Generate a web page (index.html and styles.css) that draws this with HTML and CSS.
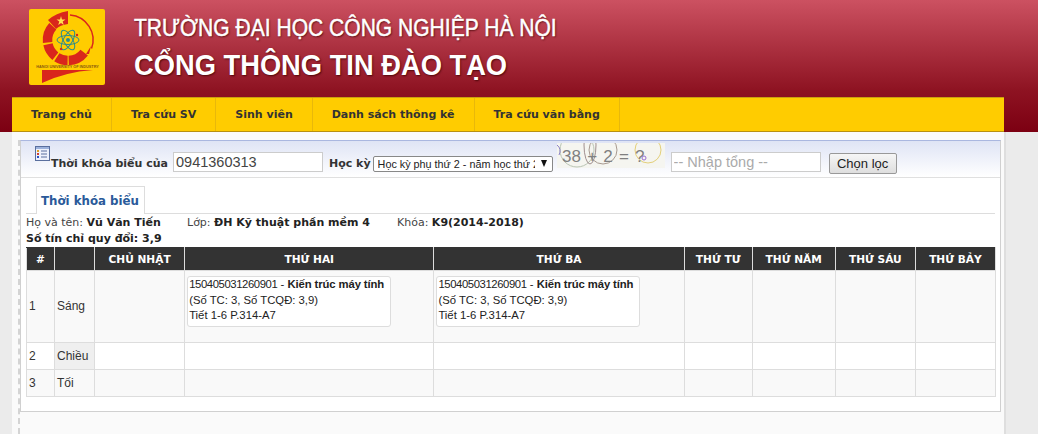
FILE: index.html
```html
<!DOCTYPE html>
<html lang="vi">
<head>
    <meta charset="UTF-8">
    <meta name="viewport" content="width=device-width, initial-scale=1.0">
    <title>Thời khóa biểu</title>
    <link rel="stylesheet" href="styles.css">
</head>
<body>
    <div class="top">
        <div class="brand">
            <svg class="logo" width="76" height="76" viewBox="0 0 76 76">
                <rect width="76" height="76" rx="2" fill="#ffcc00"/>
                <g fill="none" stroke="#d9261c" stroke-width="9.500">
                    <path d="M23.800 17.300 A20.500 20.500 0 0 0 18.600 33.500"/>
                    <path d="M19 35.300 A20.500 20.500 0 0 0 26.400 47.200"/>
                    <path d="M27.800 48.200 A20.500 20.500 0 0 0 38.600 51.500"/>
                    <path d="M39.700 51.500 A20.500 20.500 0 0 0 55.200 43.600"/>
                </g>
                <path d="M39 2 L39 15 Q31 16 27 20 L19 11 Q27 4 39 2 Z" fill="#d9261c"/>
                <polygon points="32,7 33,10.500 36.500,10.500 33.700,12.500 34.800,16 32,14 29.200,16 30.300,12.500 27.500,10.500 31,10.500" fill="#ffe14d"/>
                <path d="M41 6 A25 25 0 0 1 62.500 39.600" fill="none" stroke="#d9261c" stroke-width="1.500"/>
                <path d="M62 37 L57 45 L60 45 Z" fill="#d9261c"/>
                <g fill="none" stroke="#2f8c8c" stroke-width="1">
                    <ellipse cx="39" cy="31" rx="11" ry="4.500"/>
                    <ellipse cx="39" cy="31" rx="11" ry="4.500" transform="rotate(60 39 31)"/>
                    <ellipse cx="39" cy="31" rx="11" ry="4.500" transform="rotate(120 39 31)"/>
                </g>
                <circle cx="39" cy="31" r="2" fill="#2f8c8c"/>
                <circle cx="48" cy="26" r="1.200" fill="#d9261c"/>
                <circle cx="32" cy="40" r="1.200" fill="#d9261c"/>
                <text class="logo-text" x="38.500" y="59" text-anchor="middle">HANOI UNIVERSITY OF INDUSTRY</text>
                <path d="M13 61 L64 61 Q36 63 13 74 Z" fill="#d9261c"/>
            </svg>
            <div class="brand-text">
                <div class="school">TRƯỜNG ĐẠI HỌC CÔNG NGHIỆP HÀ NỘI</div>
                <div class="portal">CỔNG THÔNG TIN ĐÀO TẠO</div>
            </div>
        </div>
        <ul class="nav">
            <li>Trang chủ</li>
            <li>Tra cứu SV</li>
            <li>Sinh viên</li>
            <li>Danh sách thông kê</li>
            <li>Tra cứu văn bằng</li>
        </ul>
    </div>

    <div class="main">
        <div class="content">
            <div class="panel">
                <form class="filter" onsubmit="return false;">
                    <svg class="filter-icon" width="15" height="15" viewBox="0 0 15 15">
                        <rect x="0.500" y="0.500" width="14" height="14" fill="#eef1fb" stroke="#5a6f9e"/>
                        <rect x="1" y="1" width="13" height="2" fill="#9db2dc"/>
                        <rect x="2" y="4" width="2" height="2" fill="#e0a020"/>
                        <rect x="2" y="7" width="2" height="2" fill="#d04030"/>
                        <rect x="2" y="10" width="2" height="2" fill="#3050c0"/>
                        <path d="M6 5h6M6 8h6M6 11h6" stroke="#5a6f9e"/>
                    </svg>
                    <label class="filter-label" for="masv">Thời khóa biểu của</label>
                    <input class="field" type="text" id="masv" value="0941360313">
                    <label class="filter-label term-label" for="hocky">Học kỳ</label>
                    <span class="select-wrap">
                        <select id="hocky">
                            <option>Học kỳ phụ thứ 2 - năm học thứ 2</option>
                        </select>
                    </span>
                    <svg class="captcha" width="108" height="25" viewBox="0 0 108 25">
                        <rect width="108" height="25" fill="#f5f5f0"/>
                        <g fill="none" stroke-width="1">
                            <circle cx="20" cy="7" r="17" stroke="#b9c4b4"/>
                            <ellipse cx="33" cy="2" rx="6" ry="19" stroke="#a08f8f"/>
                            <circle cx="46" cy="7" r="14" stroke="#a89a90"/>
                            <circle cx="91" cy="7" r="13" stroke="#e3cf7a"/>
                            <path d="M0 2 Q5 6 2 12" stroke="#8a80c8"/>
                        </g>
                        <circle cx="87" cy="15" r="2" fill="none" stroke="#9a6fd0"/>
                        <text class="captcha-text" x="5" y="19">38 + 2 = ?</text>
                    </svg>
                    <input class="field total" type="text" placeholder="-- Nhập tổng --">
                    <button class="btn" type="submit">Chọn lọc</button>
                </form>

                <div class="tabs">
                    <span class="tab">Thời khóa biểu</span>
                </div>

                <div class="info info-first">
                    <span class="info-name">Họ và tên: <b>Vũ Văn Tiến</b></span>
                    <span class="info-class">Lớp: <b>ĐH Kỹ thuật phần mềm 4</b></span>
                    <span>Khóa: <b>K9(2014-2018)</b></span>
                </div>
                <div class="info"><b>Số tín chỉ quy đổi: 3,9</b></div>

                <table class="tkb">
                    <colgroup>
                        <col class="c-no">
                        <col class="c-buoi">
                        <col class="c-cn">
                        <col class="c-t2">
                        <col class="c-t3">
                        <col class="c-t4">
                        <col class="c-t5">
                        <col class="c-t6">
                        <col class="c-t7">
                    </colgroup>
                    <thead>
                        <tr>
                            <th>#</th>
                            <th></th>
                            <th>CHỦ NHẬT</th>
                            <th>THỨ HAI</th>
                            <th>THỨ BA</th>
                            <th>THỨ TƯ</th>
                            <th>THỨ NĂM</th>
                            <th>THỨ SÁU</th>
                            <th>THỨ BẢY</th>
                        </tr>
                    </thead>
                    <tbody>
                        <tr class="row-sang">
                            <td>1</td>
                            <td class="buoi">Sáng</td>
                            <td></td>
                            <td class="has-card">
                                <div class="card"><span class="ma-hp">150405031260901</span> - <b>Kiến trúc máy tính</b><br>(Số TC: 3, Số TCQĐ: 3,9)<br>Tiết 1-6 P.314-A7</div>
                            </td>
                            <td class="has-card">
                                <div class="card"><span class="ma-hp">150405031260901</span> - <b>Kiến trúc máy tính</b><br>(Số TC: 3, Số TCQĐ: 3,9)<br>Tiết 1-6 P.314-A7</div>
                            </td>
                            <td></td>
                            <td></td>
                            <td></td>
                            <td></td>
                        </tr>
                        <tr>
                            <td>2</td>
                            <td class="buoi">Chiều</td>
                            <td></td>
                            <td></td>
                            <td></td>
                            <td></td>
                            <td></td>
                            <td></td>
                            <td></td>
                        </tr>
                        <tr>
                            <td>3</td>
                            <td class="buoi">Tối</td>
                            <td></td>
                            <td></td>
                            <td></td>
                            <td></td>
                            <td></td>
                            <td></td>
                            <td></td>
                        </tr>
                    </tbody>
                </table>
            </div>
        </div>
    </div>
</body>
</html>
```

FILE: styles.css
```css
html, body {
    height: 100%;
}
body {
    margin: 0;
    display: flex;
    flex-direction: column;
    overflow: hidden;
    font-family: "Liberation Sans", Arial, sans-serif;
    font-size: 12px;
    color: #222;
    background-color: #ebebeb;
}
.top {
    height: 132px;
    box-sizing: border-box;
    padding-top: 9px;
    background: linear-gradient(#cc5161, #8e1322 68%, #7c0012);
}
.brand {
    display: flex;
    height: 88px;
    padding-left: 29px;
}
.logo {
    flex: none;
}
.logo-text {
    font-family: "Liberation Sans", sans-serif;
    font-size: 3.800px;
    font-weight: bold;
    fill: #8a5a10;
}
.brand-text {
    margin-left: 29px;
    color: #fff;
    text-shadow: 1px 1px 2px rgba(60, 0, 0, 0.8);
}
.school {
    margin-top: 5px;
    font-size: 24px;
    line-height: 28px;
    white-space: nowrap;
    -webkit-text-stroke: 0.5px #fff;
    transform: scaleX(0.877);
    transform-origin: left center;
}
.portal {
    margin-top: 5px;
    font-size: 30px;
    line-height: 36px;
    font-weight: bold;
    white-space: nowrap;
    transform: scaleX(0.91);
    transform-origin: left center;
}
.nav {
    display: flex;
    height: 35px;
    box-sizing: border-box;
    margin: 0 34px 0 12px;
    padding: 0;
    list-style: none;
    background-color: #ffcc00;
    border-top: 1px solid #c9a010;
    border-bottom: 1px solid #b8900f;
}
.nav li {
    padding: 0 19px;
    line-height: 34px;
    font-family: "DejaVu Sans", sans-serif;
    font-size: 11px;
    font-weight: bold;
    color: #333;
    border-right: 1px solid #e8b80a;
}
.main {
    flex: 1;
    display: flex;
    box-sizing: border-box;
    width: 994px;
    margin-left: 12px;
    padding: 8px 3px 0 6px;
    background-color: #fafafa;
    border-right: 2px solid #dedede;
}
.content {
    flex: 1;
    border-left: 2px dashed #d4d4d4;
}
.panel {
    height: 272px;
    box-sizing: border-box;
    background-color: #fff;
    border: 1px solid #d0d0d0;
    border-top-color: #aab7e0;
}
.filter {
    display: flex;
    align-items: flex-start;
    height: 37px;
    box-sizing: border-box;
    padding-left: 14px;
    background: linear-gradient(#dfe4f5, #fff);
    border-bottom: 1px solid #e0e0e0;
}
.filter-icon {
    flex: none;
    margin-top: 5px;
}
.filter-label {
    margin: 15px 0 0 1px;
    font-family: "DejaVu Sans", sans-serif;
    font-size: 11px;
    font-weight: bold;
    line-height: 16px;
    color: #333;
}
.term-label {
    margin-left: 6px;
}
.field {
    width: 150px;
    height: 20px;
    box-sizing: border-box;
    margin: 11px 0 0 5px;
    padding: 0 2px;
    font-family: "Liberation Sans", sans-serif;
    font-size: 14.500px;
    color: #444;
    background-color: #fff;
    border: 1px solid #ccc;
}
.field::placeholder {
    color: #aaa;
}
.select-wrap {
    position: relative;
    width: 180px;
    height: 16px;
    margin: 15px 0 0 2px;
}
.select-wrap::after {
    content: "";
    position: absolute;
    top: 4px;
    right: 6px;
    border-top: 7px solid #111;
    border-left: 3.500px solid transparent;
    border-right: 3.500px solid transparent;
}
.select-wrap select {
    appearance: none;
    width: 100%;
    height: 16px;
    box-sizing: border-box;
    padding: 0 17px 0 4px;
    font-family: "Liberation Sans", sans-serif;
    font-size: 10.800px;
    color: #222;
    background-color: #fff;
    border: 1px solid #888;
    border-radius: 2px;
}
.captcha {
    flex: none;
    margin: 2px 0 0 4px;
}
.captcha-text {
    font-family: "Liberation Sans", sans-serif;
    font-size: 17px;
    word-spacing: 1.500px;
    fill: #808080;
}
.total {
    margin-left: 6px;
    color: #aaa;
}
.btn {
    width: 68px;
    height: 21px;
    box-sizing: border-box;
    margin: 12px 0 0 8px;
    padding: 0;
    font-family: "Liberation Sans", sans-serif;
    font-size: 13px;
    color: #222;
    background: linear-gradient(#f6f6f6, #dedede);
    border: 1px solid #999;
    border-radius: 2px;
}
.tabs {
    height: 36px;
    box-sizing: border-box;
    margin: 0 5px;
    padding: 8px 0 0 10px;
    border-bottom: 1px solid #ddd;
}
.tab {
    display: block;
    width: 109px;
    height: 28px;
    box-sizing: border-box;
    padding-left: 4px;
    line-height: 29px;
    font-family: "DejaVu Sans", sans-serif;
    font-size: 11.800px;
    font-weight: bold;
    color: #2a5a9a;
    background-color: #fff;
    border: 1px solid #ddd;
    border-bottom: none;
}
.info {
    display: flex;
    margin-left: 5px;
    font-family: "DejaVu Sans", sans-serif;
    font-size: 11px;
    line-height: 16px;
    color: #444;
}
.info-first {
    margin-top: 1px;
}
.info b {
    color: #222;
}
.info-name {
    width: 161px;
}
.info-class {
    width: 210px;
}
.tkb {
    width: 970px;
    margin: 0 0 0 5px;
    table-layout: fixed;
    border-collapse: collapse;
    border: 1px solid #ddd;
}
.tkb th {
    height: 22px;
    padding: 0;
    font-family: "DejaVu Sans", sans-serif;
    font-size: 10.600px;
    color: #fff;
    background-color: #333;
    border: 1px solid #ddd;
    border-top-color: #333;
}
.tkb td {
    height: 26px;
    padding: 0 0 0 2px;
    font-size: 12px;
    color: #333;
    border: 1px solid #ddd;
}
.tkb tbody tr:nth-child(odd) td {
    background-color: #f9f9f9;
}
.tkb tbody tr .buoi {
    background-color: #efefef;
}
.row-sang td {
    height: 69px;
    padding-bottom: 2px;
}
.tkb td.has-card {
    height: 66px;
    padding: 5px 0 0 2px;
    vertical-align: top;
}
.card {
    width: 204px;
    height: 51px;
    box-sizing: border-box;
    padding: 0 1px;
    font-size: 11.300px;
    line-height: 15.500px;
    white-space: nowrap;
    color: #222;
    background-color: #fff;
    border: 1px solid #ddd;
    border-radius: 3px;
}
.ma-hp {
    letter-spacing: -0.4px;
}
.card b {
    letter-spacing: -0.1px;
}
.c-no { width: 28px; }
.c-buoi { width: 40px; }
.c-cn { width: 90px; }
.c-t2 { width: 249px; }
.c-t3 { width: 250px; }
.c-t4 { width: 68px; }
.c-t5 { width: 83px; }
.c-t6 { width: 80px; }
.c-t7 { width: 80px; }
```
